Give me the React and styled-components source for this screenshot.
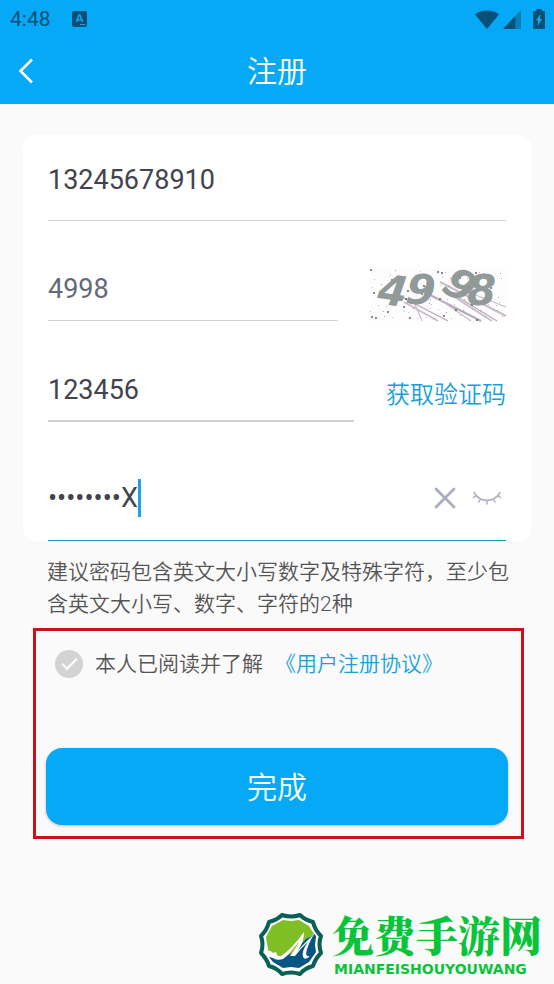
import { useState } from "react";
import styled, { createGlobalStyle } from "styled-components";

const GlobalStyle = createGlobalStyle`
    * {
        box-sizing: border-box;
    }

    body {
        margin: 0;
        background: #fafafa;
        color: #555;
        font-family: Roboto, "Noto Sans CJK SC", sans-serif;
    }

    button,
    input {
        font-family: inherit;
        margin: 0;
        padding: 0;
        border: 0;
        background: none;
    }

    a {
        color: #18a0dc;
        text-decoration: none;
    }
`;

const Header = styled.header`
    background: #05a9f6;
`;

const StatusBar = styled.div`
    display: flex;
    align-items: center;
    justify-content: space-between;
    height: 38px;
    padding: 0 9px 0 10px;
    color: #075078;
    font-size: 21px;
    line-height: 24px;
`;

const StatusGroup = styled.div`
    display: flex;
    align-items: center;
    gap: ${({ $gap }) => $gap}px;
`;

const TitleBar = styled.div`
    display: grid;
    grid-template-columns: 52px 1fr 52px;
    align-items: center;
    height: 66px;
`;

const Title = styled.h1`
    margin: 0;
    padding-top: 2px;
    color: #fff;
    font-size: 30px;
    font-weight: 350;
    line-height: 40px;
    text-align: center;
`;

const IconButton = styled.button`
    display: flex;
    align-items: center;
    justify-content: center;
    height: 40px;
    cursor: pointer;
`;

const Card = styled.section`
    margin: 31px 23px 0;
    padding: 0 25px;
    border-radius: 12px;
    background: #fff;
`;

const Row = styled.div`
    display: flex;
    align-items: flex-end;
    gap: 32px;
    height: ${({ $height }) => $height}px;
`;

const Field = styled.div`
    display: flex;
    align-items: center;
    flex: 1;
    min-width: 0;
    padding-bottom: ${({ $space }) => $space}px;
    border-bottom: ${({ $thick }) => ($thick ? 2 : 1)}px solid ${({ $active }) => ($active ? "#189bb0" : "#d2d2d2")};
`;

const TextInput = styled.input`
    width: ${({ $fit }) => ($fit ? "auto" : "100%")};
    field-sizing: ${({ $fit }) => ($fit ? "content" : "fixed")};
    height: 40px;
    color: ${({ $muted }) => ($muted ? "#646979" : "#42444c")};
    font-size: 27px;
    outline: none;
`;

const Caret = styled.span`
    width: 3px;
    height: 38px;
    background: #1ba3ea;
`;

const FieldIcons = styled.div`
    display: flex;
    align-items: center;
    gap: 16px;
    margin-left: auto;
    padding-right: 4px;
`;

const CaptchaButton = styled.button`
    display: block;
    height: 52px;
    cursor: pointer;
`;

const CodeButton = styled.button`
    height: 32px;
    margin-bottom: 11px;
    color: #18a0dc;
    font-size: 24px;
    font-weight: 350;
    line-height: 32px;
    cursor: pointer;
`;

const Hint = styled.p`
    margin: 15px 32px 0 47px;
    font-size: 21px;
    font-weight: 350;
    line-height: 32px;
`;

const Confirm = styled.section`
    margin: 8px 30px 0 33px;
    padding: 19px 13px 11px 10px;
    border: 3px solid #c61419;
`;

const Agreement = styled.div`
    display: flex;
    align-items: center;
    gap: 12px;
    height: 28px;
    padding-left: 9px;
    font-size: 21px;
    font-weight: 350;
    line-height: 28px;
`;

const Tick = styled.input`
    appearance: none;
    width: 28px;
    height: 28px;
    display: grid;
    place-items: center;
    border-radius: 50%;
    background: ${({ checked }) => (checked ? "#05a9f6" : "#d3d3d3")};
    cursor: pointer;

    &::after {
        content: "";
        width: 13px;
        height: 6px;
        border: solid #fff;
        border-width: 0 0 2px 2px;
        transform: translateY(-2px) rotate(-45deg);
    }
`;

const SubmitButton = styled.button`
    display: block;
    width: 100%;
    height: 77px;
    margin-top: 70px;
    padding-top: 2px;
    border-radius: 16px;
    background: #05a9f6;
    box-shadow: 0 1px 3px rgba(0, 0, 0, 0.25);
    color: #fff;
    font-size: 30px;
    font-weight: 350;
    line-height: 40px;
    cursor: pointer;
`;

const Brand = styled.footer`
    display: flex;
    align-items: center;
    justify-content: flex-end;
    gap: 8px;
    padding: 73px 12px 6px 0;
`;

const BrandText = styled.div`
    display: flex;
    flex-direction: column;
    gap: 5px;
    color: #09c43b;
`;

const BrandName = styled.strong`
    font-family: "Noto Serif CJK SC", "Noto Sans CJK SC", serif;
    font-size: 42px;
    font-weight: 900;
    line-height: 44px;
`;

const BrandLatin = styled.span`
    padding-left: 2px;
    font-family: "DejaVu Sans", sans-serif;
    font-size: 14px;
    font-weight: 700;
    line-height: 16px;
`;

const KeyboardIcon = () => (
    <svg width="15" height="16" viewBox="0 0 15 16" aria-hidden="true">
        <rect width="15" height="16" rx="2" fill="#075078" />
        <path d="M4.4 11 L7 4 H8 L10.6 11 M5.3 9 H9.7" fill="none" stroke="#18a3e4" strokeWidth="1.6" />
        <path d="M8 13.5 H13" stroke="#18a3e4" />
    </svg>
);

const WifiIcon = () => (
    <svg width="24" height="19" viewBox="0 0 24 19" aria-hidden="true">
        <path d="M0 4.5 C6 -.7 18 -.7 24 4.5 L12 19 Z" fill="#075078" />
    </svg>
);

const SignalIcon = () => (
    <svg width="18" height="19" viewBox="0 0 18 19" aria-hidden="true">
        <path d="M12.5 5.8 L18 0 V19 H12.5 Z" fill="#087db9" />
        <path d="M0 19 L12.5 5.8 V19 Z" fill="#075078" />
    </svg>
);

const BatteryIcon = () => (
    <svg width="12" height="20" viewBox="0 0 12 20" aria-hidden="true">
        <path d="M3.5 0 H8.5 V2 H11 Q12 2 12 3 V19 Q12 20 11 20 H1 Q0 20 0 19 V3 Q0 2 1 2 H3.5 Z" fill="#075078" />
        <path d="M7.5 5 L3 11.5 H5.3 L4.5 17 L9 10 H6.7 Z" fill="#20a9e8" />
    </svg>
);

const BackIcon = () => (
    <svg width="16" height="26" viewBox="0 0 16 26" aria-hidden="true">
        <path d="M14 1.5 L2.5 13 L14 24.5" fill="none" stroke="#fff" strokeWidth="2.6" />
    </svg>
);

const ClearIcon = () => (
    <svg width="22" height="22" viewBox="0 0 22 22" aria-hidden="true">
        <path d="M2 2 L20 20 M20 2 L2 20" stroke="#a9adbd" strokeWidth="2.8" strokeLinecap="round" />
    </svg>
);

const ClosedEyeIcon = () => (
    <svg width="30" height="14" viewBox="0 0 30 14" aria-hidden="true">
        <path
            d="M2 1.5 C8 12 22 12 28 1.5 M4 4.5 L1.5 6.5 M8.5 8 L7 11 M15 9.8 V13 M21.5 8 L23 11 M26 4.5 L28.5 6.5"
            fill="none"
            stroke="#b1b4c0"
            strokeWidth="1.6"
            strokeLinecap="round"
        />
    </svg>
);

const CaptchaImage = styled.svg`
    display: block;
    overflow: visible;
`;

const specks = Array.from({ length: 110 }, (_, i) => ({
    x: (i * 47 + (i % 7) * 13) % 135,
    y: (i * 29 + (i % 5) * 7 + (i % 11) * 3) % 51,
    fill: ["#555270", "#b783b4", "#86b8ad", "#77769b"][i % 4],
    size: i % 4 === 0 ? 2 : 1,
}));

const captchaLines = [
    [30, 27, 78, 52], [34, 33, 68, 52], [43, 31, 52, 52], [58, 25, 111, 52], [66, 28, 101, 52],
    [70, 13, 136, 47], [73, 19, 127, 52], [83, 27, 122, 52], [98, 23, 136, 38],
];

const digits = [
    { char: "4", x: 8, y: 36, turn: 8, size: 42 },
    { char: "9", x: 36, y: 35, turn: 6, size: 42 },
    { char: "9", x: 75, y: 29, turn: 32, size: 42 },
    { char: "8", x: 97, y: 36, turn: 0, size: 42 },
];

const Captcha = () => (
    <CaptchaImage width="136" height="52" viewBox="0 0 136 52" role="img" aria-label="4998">
        <rect width="136" height="52" fill="#fdfdfd" />
        {captchaLines.map(([x1, y1, x2, y2], i) => (
            <line key={i} x1={x1} y1={y1} x2={x2} y2={y2} stroke={i % 3 ? "#cbbcc9" : "#b7aab8"} strokeWidth={i % 2 ? 2 : 1.3} />
        ))}
        {specks.map(({ x, y, fill, size }, i) => (
            <rect key={i} x={x} y={y} width={size} height={size} fill={fill} opacity=".7" />
        ))}
        {digits.map(({ char, x, y, turn, size }, i) => (
            <text
                key={i}
                x={x}
                y={y}
                transform={`rotate(${turn} ${x + 12} ${y - 13})`}
                fill="#929999"
                fontFamily="DejaVu Sans"
                fontStyle="italic"
                fontWeight="700"
                fontSize={size}
            >
                {char}
            </text>
        ))}
    </CaptchaImage>
);

const BrandLogo = () => (
    <svg width="66" height="65" viewBox="0 0 66 65" aria-hidden="true">
        <path
            d="M24 3 Q33 6 42 3 Q47 8 55 10 Q57 18 63 24 Q60 32 63 41 Q57 47 55 54 Q47 56 42 62 Q33 59 24 62 Q19 56 11 54 Q9 47 3 41 Q6 32 3 24 Q9 18 11 10 Q19 8 24 3 Z"
            fill="#fff"
            stroke="#096057"
            strokeWidth="4"
            strokeLinejoin="round"
        />
        <path d="M25 8 L33 9 L41 8 L51 14 L56 22 L45 30 L35 42 L23 46 L11 42 L9 32 L8 25 L14 14 Z" fill="#80be25" />
        <path d="M57 22 L58 25 L57 33 L58 40 L51 50 L41 56 L33 55 L25 56 L15 50 L11 45 L23 47 L34 41 L48 27 Z" fill="#075582" />
        <path
            d="M10 42 Q9 38 13 39 Q14 42 18 40 Q19 45 23 44 Q33 38 46 20 Q46 30 40 38 Q48 30 56 22 Q49 34 48 42 Q49 45 52 44 Q47 49 45 45 Q43 40 50 30 Q42 37 37 44 L32 44 Q38 36 42 28 Q32 42 25 47 Q17 50 10 42 Z"
            fill="#fff"
        />
    </svg>
);

const App = () => {
    const [phone, setPhone] = useState("13245678910");
    const [captcha, setCaptcha] = useState("4998");
    const [code, setCode] = useState("123456");
    const [password, setPassword] = useState("••••••••X");
    const [agreed, setAgreed] = useState(false);

    return (
        <>
            <GlobalStyle />
            <Header>
                <StatusBar>
                    <StatusGroup $gap={21}>
                        <span>4:48</span>
                        <KeyboardIcon />
                    </StatusGroup>
                    <StatusGroup $gap={12}>
                        <StatusGroup $gap={4}>
                            <WifiIcon />
                            <SignalIcon />
                        </StatusGroup>
                        <BatteryIcon />
                    </StatusGroup>
                </StatusBar>
                <TitleBar>
                    <IconButton aria-label="返回">
                        <BackIcon />
                    </IconButton>
                    <Title>注册</Title>
                </TitleBar>
            </Header>
            <main>
                <Card>
                    <Row $height={86}>
                        <Field $space={20}>
                            <TextInput aria-label="手机号" value={phone} onChange={(e) => setPhone(e.target.value)} />
                        </Field>
                    </Row>
                    <Row $height={100}>
                        <Field $space={11}>
                            <TextInput $muted aria-label="图形验证码" value={captcha} onChange={(e) => setCaptcha(e.target.value)} />
                        </Field>
                        <CaptchaButton aria-label="刷新图形验证码">
                            <Captcha />
                        </CaptchaButton>
                    </Row>
                    <Row $height={101}>
                        <Field $space={10} $thick>
                            <TextInput aria-label="短信验证码" value={code} onChange={(e) => setCode(e.target.value)} />
                        </Field>
                        <CodeButton>获取验证码</CodeButton>
                    </Row>
                    <Row $height={119}>
                        <Field $space={22} $active>
                            <TextInput $fit aria-label="密码" value={password} onChange={(e) => setPassword(e.target.value)} />
                            <Caret />
                            <FieldIcons>
                                <IconButton aria-label="清除" onClick={() => setPassword("")}>
                                    <ClearIcon />
                                </IconButton>
                                <IconButton aria-label="显示密码">
                                    <ClosedEyeIcon />
                                </IconButton>
                            </FieldIcons>
                        </Field>
                    </Row>
                </Card>
                <Hint>建议密码包含英文大小写数字及特殊字符，至少包含英文大小写、数字、字符的2种</Hint>
                <Confirm>
                    <Agreement>
                        <Tick id="agree" type="checkbox" checked={agreed} onChange={() => setAgreed(!agreed)} />
                        <label htmlFor="agree">本人已阅读并了解</label>
                        <a href="#agreement">《用户注册协议》</a>
                    </Agreement>
                    <SubmitButton>完成</SubmitButton>
                </Confirm>
            </main>
            <Brand>
                <BrandLogo />
                <BrandText>
                    <BrandName>免费手游网</BrandName>
                    <BrandLatin>MIANFEISHOUYOUWANG</BrandLatin>
                </BrandText>
            </Brand>
        </>
    );
};

export default App;
